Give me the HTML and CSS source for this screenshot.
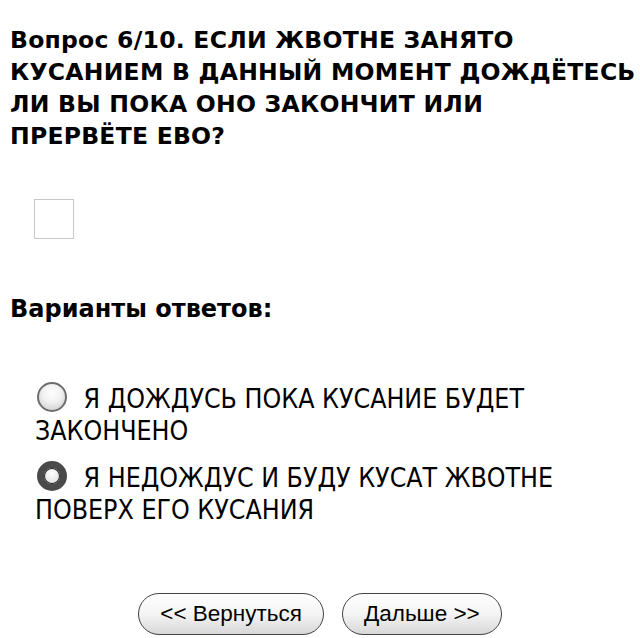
FILE: index.html
```html
<!DOCTYPE html>
<html lang="ru">
<head>
  <meta charset="UTF-8" />
  <meta name="viewport" content="width=device-width, initial-scale=1.0"/>
  <title>Вопрос 6/10</title>
  <link rel="stylesheet" href="styles.css">
</head>
<body>
  <div class="quiz">
    <h1 class="question">Вопрос 6/10. ЕСЛИ ЖВОТНЕ ЗАНЯТО<br>КУСАНИЕМ В ДАННЫЙ МОМЕНТ ДОЖДЁТЕСЬ<br>ЛИ ВЫ ПОКА ОНО ЗАКОНЧИТ ИЛИ<br>ПРЕРВЁТЕ ЕВО?</h1>

    <!-- picture placeholder -->
    <div class="picture"></div>

    <h2 class="variants">Варианты ответов:</h2>

    <form class="answers">
      <label class="answer">
        <input type="radio" name="answer" value="1" />
        Я ДОЖДУСЬ ПОКА КУСАНИЕ БУДЕТ ЗАКОНЧЕНО
      </label>
      <label class="answer">
        <input type="radio" name="answer" value="2" checked />
        Я НЕДОЖДУС И БУДУ КУСАТ ЖВОТНЕ ПОВЕРХ ЕГО КУСАНИЯ
      </label>

      <div class="nav">
        <button type="button" class="btn">&lt;&lt; Вернуться</button>
        <button type="button" class="btn">Дальше &gt;&gt;</button>
      </div>
    </form>
  </div>
</body>
</html>
```

FILE: styles.css
```css
body {
  margin: 0;
  background: #fff;
  color: #000;
}

.quiz {
  padding: 24px 10px 0 10px;
}

.question {
  font-family: "DejaVu Sans", sans-serif;
  font-weight: bold;
  font-size: 23.5px;
  letter-spacing: 0.25px;
  line-height: 32px;
  white-space: nowrap;
  margin: 0;
}

.picture {
  width: 38px;
  height: 38px;
  border: 1px solid #c8c8c8;
  margin: 47px 0 0 24px;
}

.variants {
  font-family: "DejaVu Sans", sans-serif;
  font-weight: bold;
  font-size: 24px;
  margin: 56px 0 0 0;
}

.answers {
  margin-top: 59px;
}

.answer {
  display: block;
  font-family: "DejaVu Sans", sans-serif;
  font-stretch: condensed;
  font-size: 26.5px;
  line-height: 32px;
  padding-left: 25px;
  margin-bottom: 14px;
}

.answer input {
  -webkit-appearance: none;
  appearance: none;
  width: 30px;
  height: 30px;
  margin: 0 9px 0 2px;
  vertical-align: -4px;
  border-radius: 50%;
  border: 2px solid #6e6e6e;
  background: radial-gradient(circle at 50% 35%, #fff 0%, #f0f0f0 45%, #c4c4c4 100%);
  box-sizing: border-box;
}

.answer input:checked {
  border: 7px solid #4a4a4a;
  background: radial-gradient(circle at 50% 35%, #fff 0%, #d6d6d6 100%);
  box-shadow: inset 0 0 0 1px #222;
}

.nav {
  display: flex;
  justify-content: center;
  gap: 18px;
  margin-top: 67px;
}

.btn {
  font-family: "Liberation Sans", Arial, sans-serif;
  font-size: 22.5px;
  color: #000;
  height: 42px;
  padding: 0 21px;
  border: 1px solid #444;
  border-radius: 21px;
  background: linear-gradient(to bottom, #fff 0%, #f4f4f4 50%, #d8d8d8 100%);
}
```
